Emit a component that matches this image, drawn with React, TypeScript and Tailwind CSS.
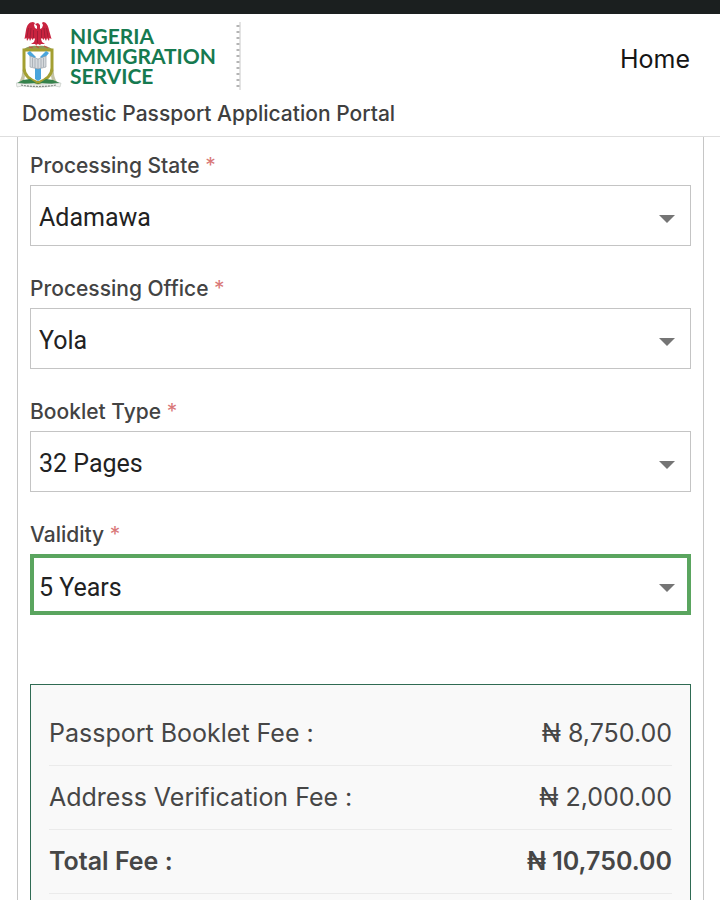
import { useState } from 'react';
import type { ReactNode } from 'react';

interface FieldProps {
  id: string;
  label: string;
  options: string[];
  active?: boolean;
}

interface Fee {
  label: string;
  amount: string;
  total?: boolean;
}

const fields: FieldProps[] = [
  { id: 'state', label: 'Processing State', options: ['Adamawa', 'Abia', 'Lagos'] },
  { id: 'office', label: 'Processing Office', options: ['Yola'] },
  { id: 'booklet', label: 'Booklet Type', options: ['32 Pages', '64 Pages'] },
  { id: 'validity', label: 'Validity', options: ['5 Years', '10 Years'], active: true },
];

const fees: Fee[] = [
  { label: 'Passport Booklet Fee :', amount: '₦ 8,750.00' },
  { label: 'Address Verification Fee :', amount: '₦ 2,000.00' },
  { label: 'Total Fee :', amount: '₦ 10,750.00', total: true },
];

function CoatOfArms() {
  return (
    <svg width="46" height="68" viewBox="0 0 46 68" aria-hidden="true">
      {/* eagle */}
      <path
        d="M17 0C13 0 11 3 10 8L8.500 17l2-1 .5 3 2-3 1 3 1.500-3 1 2 1.500-2 1 1-1 3-3 2h4l1 1 2-1 2 1 1-1h4l-3-2-1-3 1-1 1.500 2 1-2 1.500 3 1-3 2 3 .5-3 2 1L33 8C32 3 30 0 27 0l-1 1 1 2-1 3-2 1V3l-2-2-3 1 2 2v3l-2-1-1-3 1-2z"
        fill="#c9233f"
      />
      <path
        d="M12.500 6l-1.500 9M15 6l-1 10M17.500 8v8M30.500 6l1.500 9M28 6l1 10M25.500 8v8M21.500 9v12"
        stroke="#8f1a33"
        strokeWidth="0.700"
        fill="none"
      />
      {/* wreath */}
      <path d="M8 27q6-4 14-3 8-1 14 3z" fill="#8c9a5a" />
      <path d="M13 25l4 1M20 24l3 2M28 24l4 2" stroke="#c0563f" strokeWidth="1.200" />
      {/* supporters */}
      <path d="M6 46l3 8-1 5-5 1q4-6 3-14zM38 46l-3 8 1 5 5 1q-4-6-3-14z" fill="#c3c3a4" />
      {/* shield */}
      <path d="M8 28h28v18c0 7-6 12-14 15C14 58 8 53 8 46z" fill="#fff" stroke="#a39f32" strokeWidth="3" />
      <path d="M11 31l3-2 6 6-3 3zM33 31l-3-2-6 6 3 3zM19 44h6v13l-3 2-3-2z" fill="#4aa5dc" />
      {/* book */}
      <path d="M14 34l8 3 8-3v11l-8 2-8-2z" fill="#d5d9dd" stroke="#8f969d" strokeWidth="0.600" />
      <path d="M22 37v10M16.500 36v9M19 37v9M25 37v9M27.500 36v9" stroke="#9299a1" strokeWidth="0.600" />
      {/* ground and scroll */}
      <path d="M1 61l6-3 7-1 8 5 8-5 7 1 7 3-8 1-14-1-14 1z" fill="#35824b" />
      <path d="M0 61q22 3 45 0l-1 4-5-1q-16 3-33 0l-5 1z" fill="#f1f3ef" stroke="#b3bab4" strokeWidth="0.500" />
      <path d="M5 63q17 3 35 0" stroke="#7f8681" strokeWidth="1.200" strokeDasharray="2 1" fill="none" />
    </svg>
  );
}

function Header() {
  return (
    <header className="border-b border-[#dedede] bg-white">
      <div className="flex items-center justify-between pt-2 pr-[30px] pl-4">
        <div className="flex items-center">
          <CoatOfArms />
          <div className="ml-2 flex flex-col font-['Lato',sans-serif] text-[21px] leading-5 font-bold text-[#167a50]">
            <span>NIGERIA</span>
            <span>IMMIGRATION</span>
            <span>SERVICE</span>
          </div>
          <svg className="ml-5" width="5" height="68" aria-hidden="true">
            <path d="M4 0v68" stroke="#c8c8c8" strokeWidth="1" />
            <path d="M2 3v65" stroke="#b4b4b4" strokeWidth="3" strokeDasharray="2 4" />
          </svg>
        </div>
        <a href="#home" className="pt-[6px] text-[25px] leading-8 text-[#151515]">
          Home
        </a>
      </div>
      <h1 className="mt-2 pt-[2px] pb-2 pl-[22px] text-[21px] leading-7 font-medium text-[#3f3f3f]">
        Domestic Passport Application Portal
      </h1>
    </header>
  );
}

function Label({ htmlFor, children }: { htmlFor: string; children: ReactNode }) {
  return (
    <label htmlFor={htmlFor} className="text-[21px] leading-6 font-medium text-[#434343]">
      {children} <span className="font-normal text-[#d97878]">*</span>
    </label>
  );
}

function SelectField({ id, label, options, active }: FieldProps) {
  const [value, setValue] = useState(options[0]);

  return (
    <div className="flex flex-col gap-[7px]">
      <Label htmlFor={id}>{label}</Label>
      <div className="relative">
        <select
          id={id}
          value={value}
          onChange={(e) => setValue(e.target.value)}
          className={
            active
              ? "block h-[61px] w-full appearance-none border-4 border-[#5aa55f] bg-white pt-[6px] pl-[5px] font-['Roboto',sans-serif] text-[25px] text-[#222] outline-none"
              : "block h-[61px] w-full appearance-none border border-[#c4c4c4] bg-white pt-[5px] pl-2 font-['Roboto',sans-serif] text-[25px] text-[#222] outline-none"
          }
        >
          {options.map((o) => (
            <option key={o}>{o}</option>
          ))}
        </select>
        <svg
          className="pointer-events-none absolute top-[30px] right-4"
          width="16"
          height="8"
          viewBox="0 0 16 8"
          aria-hidden="true"
        >
          <path d="M0 0h16L8 8z" fill="#757575" />
        </svg>
      </div>
    </div>
  );
}

function FeeTable() {
  return (
    <div className="mt-[69px] flex-1 border border-b-0 border-[#2f6b53] bg-[#f9f9f9] px-[18px] pt-4">
      <table className="w-full text-[25px] text-[#464646]">
        <tbody>
          {fees.map((fee) => (
            <tr key={fee.label} className="h-16 border-b border-[#ebebeb]">
              <th scope="row" className={fee.total ? 'pt-[2px] text-left font-semibold' : 'pt-[2px] text-left font-normal'}>
                {fee.label}
              </th>
              <td className={fee.total ? 'pt-[2px] text-right font-semibold' : 'pt-[2px] text-right font-normal'}>
                {fee.amount}
              </td>
            </tr>
          ))}
        </tbody>
      </table>
    </div>
  );
}

export default function App() {
  return (
    <div className="flex min-h-screen flex-col bg-white font-['Inter',sans-serif]">
      <div className="h-[14px] bg-[#1b1f1f]" />
      <Header />
      <main className="mr-4 ml-[17px] flex flex-1 flex-col border-x border-[#c6c6c6] px-3 pt-[17px]">
        <form className="flex flex-col gap-[31px]">
          {fields.map((f) => (
            <SelectField key={f.id} {...f} />
          ))}
        </form>
        <FeeTable />
      </main>
    </div>
  );
}
